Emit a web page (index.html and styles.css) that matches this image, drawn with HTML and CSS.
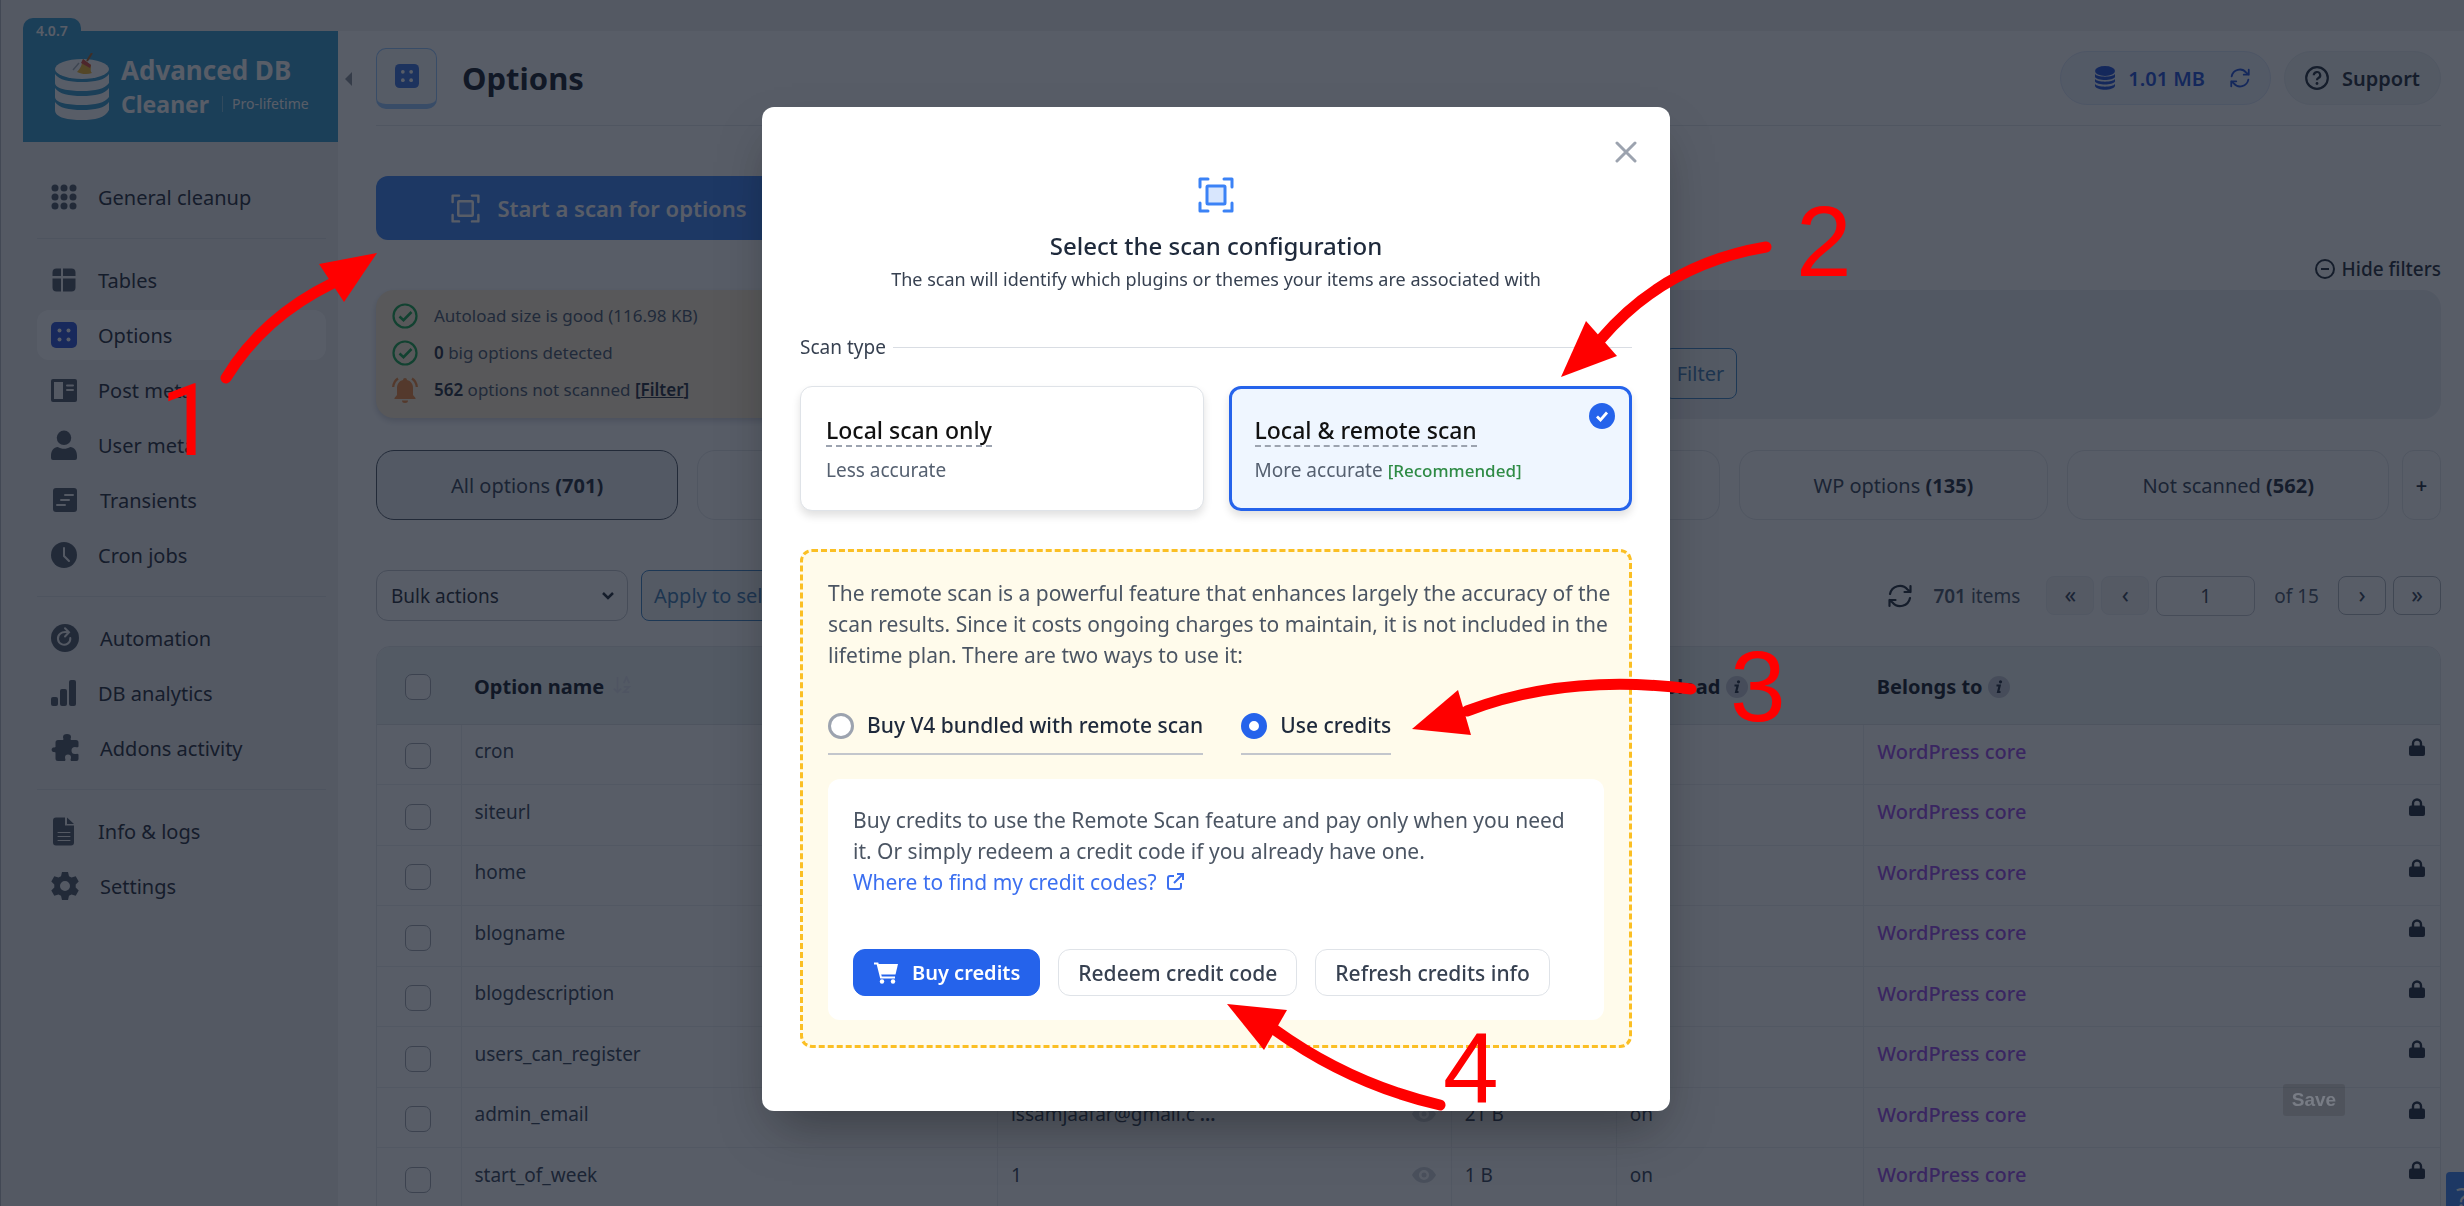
FILE: index.html
```html
<!DOCTYPE html>
<html lang="en">
<head>
  <meta charset="UTF-8" />
  <meta name="viewport" content="width=device-width, initial-scale=1.0" />
  <title>Options - Advanced DB Cleaner</title>
  <link rel="stylesheet" href="styles.css">
</head>
<body>
  <!-- Shared icons -->
  <svg class="sprite" aria-hidden="true">
    <symbol id="i-scan" viewBox="0 0 36 36">
      <path d="M2 10V2h8M26 2h8v8M34 26v8h-8M10 34H2v-8" fill="none" stroke="currentColor" stroke-width="3" stroke-linecap="round" stroke-linejoin="round"/>
      <rect x="9" y="9" width="18" height="18" rx="1" fill="currentColor" fill-opacity="0.2" stroke="currentColor" stroke-width="3"/>
    </symbol>
    <symbol id="i-options" viewBox="0 0 26 26">
      <rect width="26" height="26" rx="5" fill="currentColor"/>
      <g fill="#fff"><circle cx="8.500" cy="8.500" r="2"/><circle cx="17.500" cy="8.500" r="2"/><circle cx="8.500" cy="17.500" r="2"/><circle cx="17.500" cy="17.500" r="2"/></g>
    </symbol>
    <symbol id="i-check" viewBox="0 0 26 26">
      <circle cx="13" cy="13" r="11.500" fill="none" stroke="currentColor" stroke-width="2.200"/>
      <path d="M7.500 13.500l4 3.700 8-8.200" fill="none" stroke="currentColor" stroke-width="2.600"/>
    </symbol>
    <symbol id="i-refresh" viewBox="0 0 24 24">
      <g fill="none" stroke="currentColor" stroke-width="2.200" stroke-linecap="round" stroke-linejoin="round">
        <path d="M2 10a10 10 0 0 1 17.500-4.500L22.500 8M22.500 2v6h-6"/>
        <path d="M22 14a10 10 0 0 1-17.500 4.500L1.500 16M1.500 22v-6h6"/>
      </g>
    </symbol>
    <symbol id="i-info" viewBox="0 0 22 22">
      <circle cx="11" cy="11" r="11" fill="#c3c7d2"/>
      <path d="M8.500 9.500h3.200l-1.600 6.500h2.400" fill="none" stroke="#1e293b" stroke-width="2.200"/>
      <circle cx="12.500" cy="5.800" r="1.600" fill="#1e293b"/>
    </symbol>
    <symbol id="i-eye" viewBox="0 0 24 16">
      <path fill="currentColor" fill-rule="evenodd" d="M12 0c5 0 9.500 3 12 8-2.500 5-7 8-12 8S2.500 13 0 8c2.500-5 7-8 12-8zm0 3a5 5 0 1 0 0 10 5 5 0 0 0 0-10z"/>
      <circle cx="12" cy="8" r="2.500" fill="currentColor"/>
    </symbol>
    <symbol id="i-lock" viewBox="0 0 16 18">
      <path d="M4 8V5.500a4 4 0 0 1 8 0V8" fill="none" stroke="currentColor" stroke-width="2.400"/>
      <rect y="7.500" width="16" height="10.500" rx="2" fill="currentColor"/>
    </symbol>
  </svg>

  <div class="page">
    <aside class="sidebar">
      <div class="brand">
        <span class="version">4.0.7</span>
        <svg class="brand-logo" viewBox="0 0 54 68">
          <g fill="#fff">
            <ellipse cx="27" cy="16" rx="27" ry="10"/>
            <path d="M0 21c4 6 14 8 27 8s23-2 27-8v9c-4 6-14 8-27 8S0 36 0 30z"/>
            <path d="M0 35c4 6 14 8 27 8s23-2 27-8v9c-4 6-14 8-27 8S0 50 0 44z"/>
            <path d="M0 49c4 6 14 8 27 8s23-2 27-8v8c-4 8-14 10-27 10S0 65 0 57z"/>
          </g>
          <path d="M28 6l8 6c0 4-1 6 1 8-5 2-11 1-15-1 4-4 5-8 6-13z" fill="#f0b429"/>
          <path d="M28 6l8 6-1 3-9-5z" fill="#d9483b"/>
          <path d="M32 8l5-8" stroke="#a8632a" stroke-width="2"/>
          <path d="M18 17l6-7" stroke="#a9b1ba" stroke-width="1.500"/>
        </svg>
        <div class="brand-name">
          <strong>Advanced DB</strong>
          <div class="brand-line"><strong>Cleaner</strong><span class="plan">Pro-lifetime</span></div>
        </div>
      </div>

      <nav class="menu">
        <a class="menu-item" href="#">
          <svg class="icon" viewBox="0 0 26 26"><g fill="currentColor"><circle cx="4" cy="4" r="3.500"/><circle cx="13" cy="4" r="3.500"/><circle cx="22" cy="4" r="3.500"/><circle cx="4" cy="13" r="3.500"/><circle cx="13" cy="13" r="3.500"/><circle cx="22" cy="13" r="3.500"/><circle cx="4" cy="22" r="3.500"/><circle cx="13" cy="22" r="3.500"/><circle cx="22" cy="22" r="3.500"/></g></svg>
          General cleanup
        </a>
        <hr>
        <a class="menu-item" href="#">
          <svg class="icon" viewBox="0 0 26 26"><path fill="currentColor" d="M5.500 1.500H10V9H1.500V5.500a4 4 0 0 1 4-4zM12 1.500h8.500a4 4 0 0 1 4 4V9H12zM1.500 11.500H10v13H5.500a4 4 0 0 1-4-4zM12 11.500h12.500v9a4 4 0 0 1-4 4H12z"/></svg>
          Tables
        </a>
        <a class="menu-item active" href="#">
          <svg class="icon"><use href="#i-options"/></svg>
          Options
        </a>
        <a class="menu-item" href="#">
          <svg class="icon" viewBox="0 0 26 26"><rect y="2" width="26" height="23" rx="2" fill="currentColor"/><path class="cut" d="M3 5h9v17H3z"/><path class="cut-line" d="M16 8.500h6M16 13h6"/></svg>
          Post meta
        </a>
        <a class="menu-item" href="#">
          <svg class="icon tall" viewBox="0 0 27 32"><g fill="currentColor"><circle cx="13.500" cy="8" r="7.500"/><path d="M7 17.500c4 2.500 9 2.500 13 0 4 0 7 4 7 9V29a2 2 0 0 1-2 2H2a2 2 0 0 1-2-2v-2.500c0-5 3-9 7-9z"/></g></svg>
          User meta
        </a>
        <a class="menu-item" href="#">
          <svg class="icon wide" viewBox="0 0 28 26"><rect x="2" y="1" width="24" height="24" rx="3" fill="currentColor"/><path class="cut-line" d="M14 8h8M10 13h8M6 18h8"/></svg>
          Transients
        </a>
        <a class="menu-item" href="#">
          <svg class="icon" viewBox="0 0 26 26"><circle cx="13" cy="13" r="13" fill="currentColor"/><path class="cut-line" d="M13 6v8l5 5"/></svg>
          Cron jobs
        </a>
        <hr>
        <a class="menu-item" href="#">
          <svg class="icon wide" viewBox="0 0 28 28"><circle cx="14" cy="14" r="14" fill="currentColor"/><path class="cut-line" d="M9.500 9.500a6.200 6.200 0 1 0 9.800 4.500M9.500 9.500C11 8 13 7.500 17 8.200M14 4.200l4 4-4 4.300"/></svg>
          Automation
        </a>
        <a class="menu-item" href="#">
          <svg class="icon" viewBox="0 0 26 26"><g fill="currentColor"><rect y="17" width="7" height="9" rx="2"/><rect x="9" y="9" width="7" height="17" rx="2"/><rect x="18" width="7" height="26" rx="2"/></g></svg>
          DB analytics
        </a>
        <a class="menu-item" href="#">
          <svg class="icon wide" viewBox="0 0 28 28"><path fill="currentColor" d="M7 6h5c1-1 0-1.500 0-3a4 3 0 0 1 8 0c0 1.500-1 2 0 3h5a2.500 2.500 0 0 1 2.500 2.500v4c-1 1.500-2 .500-3.500.500a3.500 3.500 0 0 0 0 7c1.500 0 2.500-1 3.500.500v4.500a2 2 0 0 1-2 2h-5.500c-1-1.500 0-2 0-3.500a3 3 0 0 0-6 0c0 1.500 1 2 0 3.500H7a2.500 2.500 0 0 1-2.500-2.500v-6c-1-1-1.500-.5-2.500-.5a2.500 2.500 0 0 1 0-4.500c1 0 1.500 0 2.500-.500V8.500A2.500 2.500 0 0 1 7 6z"/></svg>
          Addons activity
        </a>
        <hr>
        <a class="menu-item" href="#">
          <svg class="icon tall" viewBox="0 0 26 30"><path fill="currentColor" d="M5 1h9v8h9v17a3 3 0 0 1-3 3H5a3 3 0 0 1-3-3V4a3 3 0 0 1 3-3zM16 1l7 6.500h-7z"/><path class="cut-line thin" d="M7 16h12M7 20h12M7 24h12"/></svg>
          Info &amp; logs
        </a>
        <a class="menu-item" href="#">
          <svg class="icon wide" viewBox="0 0 28 28"><path fill="currentColor" fill-rule="evenodd" d="M11 0h6l1 4.200 2.500 1.400L24.700 4.300l3 5.200-3 3v3l3 3-3 5.200-4.200-1.300L18 23.800 17 28h-6l-1-4.200-2.500-1.400-4.200 1.300-3-5.200 3-3v-3l-3-3 3-5.200 4.200 1.300L10 4.200zM14 9a5 5 0 1 0 0 10 5 5 0 0 0 0-10z"/></svg>
          Settings
        </a>
      </nav>
    </aside>

    <main class="main">
      <span class="collapse"></span>
      <header class="page-header">
        <span class="header-icon"><svg><use href="#i-options"/></svg></span>
        <h1>Options</h1>
        <div class="header-actions">
          <button class="pill db-size">
            <svg class="db-icon" viewBox="0 0 20 24"><g fill="currentColor"><ellipse cx="10" cy="5" rx="10" ry="5"/><path d="M0 8c2 3.500 18 3.500 20 0v3c-2 4-18 4-20 0zM0 13c2 3.500 18 3.500 20 0v2.500c-2 4-18 4-20 0zM0 18c2 3.500 18 3.500 20 0v2c-2 5-18 5-20 0z"/></g></svg>
            1.01 MB
            <svg class="sync"><use href="#i-refresh"/></svg>
          </button>
          <button class="pill">
            <svg viewBox="0 0 24 24"><circle cx="12" cy="12" r="10.800" fill="none" stroke="currentColor" stroke-width="2.200"/><path d="M8.800 9.300a3.200 3.200 0 1 1 4.600 2.800c-1 .500-1.400 1-1.400 2.200" fill="none" stroke="currentColor" stroke-width="2.200"/><circle cx="12" cy="17.500" r="1.400" fill="currentColor"/></svg>
            Support
          </button>
        </div>
      </header>

      <button class="scan-btn"><svg><use href="#i-scan"/></svg>Start a scan for options</button>

      <a class="hide-filters" href="#">
        <svg viewBox="0 0 20 20"><circle cx="10" cy="10" r="9" fill="none" stroke="currentColor" stroke-width="2"/><path d="M6 10h8" stroke="currentColor" stroke-width="2"/></svg>
        Hide filters
      </a>

      <div class="filters-row">
        <ul class="notices">
          <li><svg class="good"><use href="#i-check"/></svg>Autoload size is good (116.98 KB)</li>
          <li><svg class="good"><use href="#i-check"/></svg><span><b>0</b> big options detected</span></li>
          <li>
            <svg class="bell" viewBox="0 0 26 26"><path fill="currentColor" d="M13 1a2 2 0 0 1 2 2c4 1 6 4 6 8v7l2.500 3v1h-21v-1L5 18v-7c0-4 2-7 6-8a2 2 0 0 1 2-2zM10 23.500h6a3 2.500 0 0 1-6 0z"/><path d="M1.200 10C1.500 6 3 3.500 6 1.500M24.800 10c-.300-4-1.800-6.500-4.800-8.500" fill="none" stroke="currentColor" stroke-width="2.300"/></svg>
            <span><b>562</b> options not scanned <a href="#">[<u>Filter</u>]</a></span>
          </li>
        </ul>
        <div class="filter-panel"><button class="outline-btn">Filter</button></div>
      </div>

      <div class="tabs">
        <button class="tab current">All options <b>(701)</b></button>
        <button class="tab">Plugins options <b>(3)</b></button>
        <button class="tab">Themes options <b>(1)</b></button>
        <button class="tab">Orphan options <b>(0)</b></button>
        <button class="tab">WP options <b>(135)</b></button>
        <button class="tab">Not scanned <b>(562)</b></button>
        <button class="tab add">+</button>
      </div>

      <div class="toolbar">
        <select aria-label="Bulk actions"><option>Bulk actions</option></select>
        <button class="outline-btn">Apply to selected</button>
        <div class="pagination">
          <svg class="sync"><use href="#i-refresh"/></svg>
          <span class="count"><b>701</b> items</span>
          <button disabled>&laquo;</button>
          <button disabled>&lsaquo;</button>
          <input type="text" value="1" aria-label="Page">
          <span class="total">of 15</span>
          <button>&rsaquo;</button>
          <button>&raquo;</button>
        </div>
      </div>

      <div class="table-wrap">
        <table>
          <colgroup><col class="c-check"><col class="c-name"><col class="c-value"><col class="c-size"><col class="c-autoload"><col></colgroup>
          <thead>
            <tr>
              <th><input type="checkbox" aria-label="Select all"></th>
              <th>Option name <svg class="sort" viewBox="0 0 20 20"><path d="M5 1v17M1 14l4 4 4-4M12 8l3-7 3 7M12 12h6l-6 6h6" fill="none" stroke="currentColor" stroke-width="2"/></svg></th>
              <th>Value</th>
              <th>Size</th>
              <th>Autoload <svg class="info"><use href="#i-info"/></svg></th>
              <th>Belongs to <svg class="info"><use href="#i-info"/></svg></th>
            </tr>
          </thead>
          <tbody>
            <tr>
              <td><input type="checkbox" aria-label="cron"></td><td>cron</td>
              <td><div class="value"></div></td><td></td><td>on</td>
              <td><div class="owner"><span>WordPress core</span><svg><use href="#i-lock"/></svg></div></td>
            </tr>
            <tr>
              <td><input type="checkbox" aria-label="siteurl"></td><td>siteurl</td>
              <td><div class="value"></div></td><td></td><td>on</td>
              <td><div class="owner"><span>WordPress core</span><svg><use href="#i-lock"/></svg></div></td>
            </tr>
            <tr>
              <td><input type="checkbox" aria-label="home"></td><td>home</td>
              <td><div class="value"></div></td><td></td><td>on</td>
              <td><div class="owner"><span>WordPress core</span><svg><use href="#i-lock"/></svg></div></td>
            </tr>
            <tr>
              <td><input type="checkbox" aria-label="blogname"></td><td>blogname</td>
              <td><div class="value"></div></td><td></td><td>on</td>
              <td><div class="owner"><span>WordPress core</span><svg><use href="#i-lock"/></svg></div></td>
            </tr>
            <tr>
              <td><input type="checkbox" aria-label="blogdescription"></td><td>blogdescription</td>
              <td><div class="value"></div></td><td></td><td>on</td>
              <td><div class="owner"><span>WordPress core</span><svg><use href="#i-lock"/></svg></div></td>
            </tr>
            <tr>
              <td><input type="checkbox" aria-label="users_can_register"></td><td>users_can_register</td>
              <td><div class="value"></div></td><td></td><td>on</td>
              <td><div class="owner"><span>WordPress core</span><svg><use href="#i-lock"/></svg></div></td>
            </tr>
            <tr>
              <td><input type="checkbox" aria-label="admin_email"></td><td>admin_email</td>
              <td><div class="value"><span>issamjaafar@gmail.c <b>...</b></span><svg><use href="#i-eye"/></svg></div></td><td>21 B</td><td>on</td>
              <td><div class="owner"><span>WordPress core</span><svg><use href="#i-lock"/></svg></div></td>
            </tr>
            <tr>
              <td><input type="checkbox" aria-label="start_of_week"></td><td>start_of_week</td>
              <td><div class="value"><span>1</span><svg><use href="#i-eye"/></svg></div></td><td>1 B</td><td>on</td>
              <td><div class="owner"><span>WordPress core</span><svg><use href="#i-lock"/></svg></div></td>
            </tr>
          </tbody>
        </table>
      </div>
    </main>

    <button class="help-btn">?</button>
  </div>

  <div class="overlay">
    <section class="modal" role="dialog" aria-labelledby="modalTitle">
      <button class="close" aria-label="Close">
        <svg viewBox="0 0 22 22"><path d="M2 2l18 18M20 2L2 20" stroke="currentColor" stroke-width="3" stroke-linecap="round"/></svg>
      </button>
      <svg class="modal-icon"><use href="#i-scan"/></svg>
      <h2 id="modalTitle">Select the scan configuration</h2>
      <p class="subtitle">The scan will identify which plugins or themes your items are associated with</p>

      <div class="section-label">Scan type</div>
      <div class="cards">
        <button class="card">
          <span class="card-title">Local scan only</span>
          <span class="card-text">Less accurate</span>
        </button>
        <button class="card selected">
          <span class="card-title">Local &amp; remote scan</span>
          <span class="card-text">More accurate <em>[Recommended]</em></span>
          <svg class="tick" viewBox="0 0 26 26"><circle cx="13" cy="13" r="13" fill="currentColor"/><path d="M8 13.500l3.500 3.500L18 9.500" fill="none" stroke="#fff" stroke-width="2.800"/></svg>
        </button>
      </div>

      <div class="credits">
        <p>The remote scan is a powerful feature that enhances largely the accuracy of the scan results. Since it costs ongoing charges to maintain, it is not included in the lifetime plan. There are two ways to use it:</p>
        <div class="choices">
          <label><input type="radio" name="mode">Buy V4 bundled with remote scan</label>
          <label><input type="radio" name="mode" checked>Use credits</label>
        </div>
        <div class="credits-box">
          <p>Buy credits to use the Remote Scan feature and pay only when you need it. Or simply redeem a credit code if you already have one.<br>
            <a href="#">Where to find my credit codes? <svg viewBox="0 0 18 18"><path d="M8 3H4a2 2 0 0 0-2 2v9a2 2 0 0 0 2 2h9a2 2 0 0 0 2-2v-4M11 1h6v6M17 1L8 10" fill="none" stroke="currentColor" stroke-width="2"/></svg></a></p>
          <div class="buttons">
            <button class="primary">
              <svg viewBox="0 0 25 22"><path d="M1 1.500h3.500l3.500 14h14" fill="none" stroke="currentColor" stroke-width="2"/><path d="M5 2h20l-2.500 10.500H7.500z" fill="currentColor"/><circle cx="9" cy="19.500" r="2.200" fill="currentColor"/><circle cx="20" cy="19.500" r="2.200" fill="currentColor"/></svg>
              Buy credits
            </button>
            <button>Redeem credit code</button>
            <button>Refresh credits info</button>
          </div>
        </div>
      </div>
    </section>
  </div>

  <button class="save-btn">Save</button>

  <!-- Step arrows -->
  <svg class="steps" viewBox="0 0 2464 1206">
    <g class="shafts">
      <path d="M226 378Q263 317 333 283"/>
      <path d="M1601 339Q1665 264 1766 247"/>
      <path d="M1467 711Q1567 673 1691 689"/>
      <path d="M1275 1030Q1350 1084 1440 1105"/>
    </g>
    <g class="heads">
      <path d="M377 253l-58 11 25 38z"/>
      <path d="M1561 377l25-56 31 35z"/>
      <path d="M1412 729l46-39 13 45z"/>
      <path d="M1227 1004l60 6-23 40z"/>
    </g>
    <g class="numbers">
      <text class="one" x="160" y="455">1</text>
      <text x="1796" y="276">2</text>
      <text x="1730" y="721">3</text>
      <text x="1443" y="1103">4</text>
    </g>
  </svg>
</body>
</html>
```
FILE: styles.css
```css
* {
  margin: 0;
  padding: 0;
  box-sizing: border-box;
}
body {
  height: 100vh;
  overflow: hidden;
  background: #f0f0f1;
  color: #374151;
  font-family: "Noto Sans", "Open Sans", sans-serif;
  font-size: 19px;
}
button, input, select {
  font-family: inherit;
  font-size: inherit;
  color: inherit;
}
button {
  cursor: pointer;
  background: none;
  border: none;
}
a {
  color: inherit;
  text-decoration: none;
}
b {
  font-weight: 600;
}
.sprite {
  display: none;
}
.page {
  position: relative;
  display: flex;
  height: 100vh;
  padding: 31px 0 0 22px;
  border-left: 1px solid #b5b9c0;
}

/* Sidebar */
.sidebar {
  flex: none;
  width: 315px;
}
.brand {
  position: relative;
  display: flex;
  align-items: center;
  gap: 12px;
  height: 111px;
  padding: 0 24px 0 32px;
  background: #3399cc;
  color: #fff;
}
.version {
  position: absolute;
  left: 0;
  top: -13px;
  height: 26px;
  padding: 0 13px;
  border-radius: 10px 10px 0 0;
  background: #3399cc;
  font-size: 14px;
  font-weight: 600;
  line-height: 26px;
}
.brand-logo {
  flex: none;
  width: 54px;
  height: 68px;
}
.brand-name strong {
  display: block;
  font-size: 26px;
  font-weight: 700;
  line-height: 34px;
}
.brand-line {
  display: flex;
  align-items: center;
}
.brand-line strong {
  font-size: 23px;
}
.plan {
  margin-left: 13px;
  padding-left: 9px;
  border-left: 1px solid #7ebede;
  font-size: 14px;
  line-height: 16px;
  white-space: nowrap;
}
.menu {
  display: flex;
  flex-direction: column;
  gap: 5px;
  padding: 30px 12px 0 14px;
}
.menu hr {
  margin: 11px 0;
  border: none;
  border-top: 1px solid #dcdfe4;
}
.menu-item {
  display: flex;
  align-items: center;
  gap: 21px;
  height: 50px;
  padding-left: 14px;
  border-radius: 12px;
  color: #1f2937;
  font-size: 20px;
}
.menu-item.active {
  background: #fff;
}
.icon {
  width: 26px;
  height: 26px;
  color: #4b5563;
}
.icon.tall {
  height: 31px;
}
.icon.wide {
  width: 28px;
  height: 28px;
}
.active .icon {
  color: #2952d9;
}
.cut {
  fill: #f0f0f1;
}
.cut-line {
  fill: none;
  stroke: #f0f0f1;
  stroke-width: 2;
  stroke-linecap: round;
}
.cut-line.thin {
  stroke-width: 1;
}

/* Main column */
.main {
  position: relative;
  flex: 1;
  min-width: 0;
  padding: 0 23px 0 38px;
  background: #fff;
}
.collapse {
  position: absolute;
  left: 7px;
  top: 41px;
  border: 7px solid transparent;
  border-right-color: #8b919c;
  border-left: none;
}
.page-header {
  display: flex;
  align-items: center;
  height: 95px;
  border-bottom: 1px solid #e5e7eb;
}
.header-icon {
  display: flex;
  justify-content: center;
  align-items: center;
  width: 61px;
  height: 61px;
  margin-right: 25px;
  border: 1px solid #93c5fd;
  border-bottom-width: 5px;
  border-radius: 10px;
  background: #f8fafc;
  color: #3b73e0;
}
.header-icon svg {
  width: 24px;
  height: 24px;
}
h1 {
  font-size: 31px;
  font-weight: 700;
  color: #111827;
}
.header-actions {
  display: flex;
  gap: 13px;
  margin-left: auto;
}
.pill {
  display: flex;
  align-items: center;
  gap: 13px;
  height: 54px;
  padding: 0 20px;
  border: 1px solid #e9edf0;
  border-radius: 27px;
  background: #f0f4f5;
  color: #1f2937;
  font-size: 20px;
  font-weight: 600;
}
.pill svg {
  width: 24px;
  height: 24px;
}
.pill.db-size {
  padding-left: 34px;
  border-color: #dbe6f8;
  background: #eff3fc;
  color: #1d4ed8;
}
.pill .db-icon {
  width: 20px;
}
.pill .sync {
  width: 20px;
  height: 20px;
  margin-left: 12px;
}
.scan-btn {
  display: flex;
  align-items: center;
  justify-content: center;
  gap: 17px;
  width: 446px;
  height: 64px;
  margin-top: 50px;
  border-radius: 12px;
  background: #3b82f6;
  color: #fff;
  font-size: 22px;
  font-weight: 600;
}
.scan-btn svg {
  width: 29px;
  height: 29px;
}
.hide-filters {
  display: flex;
  align-items: center;
  justify-content: flex-end;
  gap: 7px;
  margin: 15px 0 7px;
  color: #1f2937;
  font-weight: 500;
  line-height: 28px;
}
.hide-filters svg {
  width: 20px;
  height: 20px;
}
.filters-row {
  display: grid;
  grid-template-columns: 1fr 3fr;
  gap: 25px;
}
.notices {
  height: 128px;
  padding: 7px 16px;
  border-radius: 18px;
  background: #fdeed2;
  box-shadow: 0 3px 6px rgba(30, 41, 80, 0.2);
  color: #475569;
  font-size: 17px;
  list-style: none;
}
.notices li {
  display: flex;
  align-items: center;
  gap: 16px;
  height: 37px;
}
.notices svg {
  width: 26px;
  height: 26px;
}
.notices b, .notices a {
  color: #1e293b;
  font-weight: 600;
}
.good {
  color: #16a34a;
}
.bell {
  color: #f0883a;
}
.filter-panel {
  display: flex;
  align-items: flex-end;
  justify-content: flex-end;
  height: 129px;
  padding: 0 46% 20px 0;
  border-radius: 18px;
  background: #eceef2;
}
.outline-btn {
  height: 51px;
  padding: 0 12px;
  border: 1px solid #3b82c4;
  border-radius: 8px;
  background: #f0f4f5;
  color: #3b78b0;
  font-size: 20px;
}
.tabs {
  display: flex;
  gap: 19px;
  margin-top: 31px;
}
.tab {
  flex: 1 1 auto;
  height: 70px;
  border: 1px solid #e3e6ea;
  border-radius: 18px;
  color: #334155;
  font-size: 20px;
}
.tab b {
  color: #1e293b;
  font-weight: 700;
}
.tab.current {
  border: 1px solid #4b5563;
  background: #eff1f4;
}
.tab.add {
  flex: none;
  width: 39px;
  margin-left: -6px;
  border-radius: 12px;
  color: #1e293b;
  font-weight: 600;
}
.toolbar {
  display: flex;
  align-items: center;
  gap: 13px;
  margin-top: 50px;
}
.toolbar select {
  width: 252px;
  height: 51px;
  padding: 0 14px;
  border: 1px solid #c3c7ce;
  border-radius: 12px;
  appearance: none;
  background: #fff url("data:image/svg+xml,%3Csvg xmlns='http://www.w3.org/2000/svg' width='14' height='10'%3E%3Cpath d='M2 2l5 5 5-5' fill='none' stroke='%231f2937' stroke-width='2.500'/%3E%3C/svg%3E") no-repeat right 12px center;
  color: #1f2937;
}
.pagination {
  display: flex;
  align-items: center;
  gap: 7px;
  margin-left: auto;
}
.pagination .sync {
  width: 24px;
  height: 24px;
  color: #1f2937;
}
.count {
  margin: 0 19px 0 14px;
  color: #475569;
}
.pagination button {
  width: 48px;
  height: 39px;
  padding-bottom: 4px;
  border: 1px solid #aeb4bd;
  border-radius: 8px;
  color: #334155;
  font-size: 23px;
  line-height: 30px;
}
.pagination button:disabled {
  border-color: #eceef1;
  background: #f3f4f6;
}
.pagination input {
  width: 99px;
  height: 40px;
  border: 1px solid #c3c7ce;
  border-radius: 8px;
  background: #fff;
  text-align: center;
}
.total {
  margin: 0 12px;
  color: #475569;
}

/* Options table */
.table-wrap {
  margin-top: 25px;
  border: 1px solid #e3e6ea;
  border-radius: 14px 14px 0 0;
  overflow: hidden;
}
table {
  width: 100%;
  border-collapse: collapse;
  table-layout: fixed;
}
.c-check {
  width: 84px;
}
.c-name {
  width: 26%;
}
.c-value {
  width: 22%;
}
.c-size {
  width: 8%;
}
.c-autoload {
  width: 12%;
}
th {
  height: 77px;
  padding: 2px 13px 0;
  border-bottom: 1px solid #dde0e5;
  background: #eef3f5;
  color: #111827;
  font-size: 20px;
  font-weight: 700;
  text-align: left;
}
td {
  height: 60px;
  padding: 0 15px 6px 13px;
  border-bottom: 1px solid #eceef1;
  border-left: 1px solid #eceef1;
  color: #334155;
}
tr:nth-child(even) td {
  height: 61px;
}
th:first-child, td:first-child {
  padding: 4px 0 0 28px;
  border-left: none;
}
input[type="checkbox"] {
  display: block;
  appearance: none;
  width: 26px;
  height: 26px;
  border: 1px solid #a0a5ae;
  border-radius: 7px;
  background: #fff;
}
.sort {
  width: 18px;
  height: 18px;
  margin-left: 4px;
  color: #e0e3ee;
}
.info {
  width: 22px;
  height: 22px;
  vertical-align: -4px;
}
.value, .owner {
  display: flex;
  align-items: center;
  justify-content: space-between;
}
.value svg {
  width: 24px;
  height: 16px;
  color: #d0d4da;
}
.owner {
  color: #9c48ea;
  font-size: 20px;
  font-weight: 500;
}
.owner svg {
  width: 16px;
  height: 18px;
  margin-bottom: 9px;
  color: #1e293b;
}

.help-btn {
  position: absolute;
  right: -32px;
  bottom: -16px;
  width: 50px;
  height: 50px;
  border-radius: 4px;
  background: #3b82f6;
  color: #fff;
  font-size: 28px;
  text-align: left;
  padding-left: 10px;
}
.save-btn {
  position: fixed;
  right: 119px;
  bottom: 90px;
  width: 62px;
  height: 32px;
  border-radius: 3px;
  background: rgba(0, 0, 0, 0.1);
  color: #787c85;
  font-family: "Liberation Sans", sans-serif;
  font-weight: 700;
}

/* Scan dialog */
.overlay {
  position: fixed;
  inset: 0;
  display: flex;
  justify-content: center;
  align-items: flex-start;
  padding: 107px 32px 0 0;
  background: rgba(17, 24, 39, 0.7);
}
.modal {
  position: relative;
  width: 100%;
  max-width: 908px;
  padding: 70px 38px 63px;
  border-radius: 12px;
  background: #fff;
  box-shadow: 0 25px 50px -12px rgba(0, 0, 0, 0.35);
}
.close {
  position: absolute;
  top: 34px;
  right: 33px;
  color: #9ca3af;
}
.close svg {
  display: block;
  width: 22px;
  height: 22px;
}
.modal-icon {
  display: block;
  width: 36px;
  height: 36px;
  margin: 0 auto 17px;
  color: #3b82f6;
}
h2 {
  color: #1e293b;
  font-size: 24px;
  font-weight: 500;
  line-height: 32px;
  text-align: center;
}
.subtitle {
  margin: 3px 0 40px;
  color: #374151;
  font-size: 18px;
  line-height: 28px;
  text-align: center;
}
.section-label {
  display: flex;
  align-items: center;
  gap: 7px;
  margin-bottom: 25px;
  color: #374151;
  line-height: 28px;
}
.section-label::after {
  content: "";
  flex: 1;
  border-top: 1px solid #d9dde3;
}
.cards {
  display: grid;
  grid-template-columns: 1fr 1fr;
  gap: 25px;
  margin-bottom: 38px;
}
.card {
  position: relative;
  display: flex;
  flex-direction: column;
  align-items: flex-start;
  height: 125px;
  padding: 28px 25px;
  border: 1px solid #dfe3e8;
  border-radius: 12px;
  background: #fff;
  box-shadow: 0 5px 9px rgba(0, 0, 0, 0.12);
}
.card.selected {
  padding: 26px 23px;
  border: 3px solid #2563eb;
  background: #eff6ff;
}
.card-title {
  border-bottom: 2px dashed #9ca3af;
  color: #111;
  font-size: 23px;
  font-weight: 500;
  line-height: 30px;
}
.card-text {
  margin-top: 9px;
  color: #556070;
  line-height: 28px;
}
.card-text em {
  color: #2e8b45;
  font-size: 17px;
  font-style: normal;
  font-weight: 500;
}
.tick {
  position: absolute;
  top: 14px;
  right: 14px;
  width: 26px;
  height: 26px;
  color: #2563eb;
}
.credits {
  padding: 26px 18px 25px 25px;
  border: 3px dashed #fbbf24;
  border-radius: 12px;
  background: #fffbeb;
  color: #4b5563;
  font-size: 21px;
  line-height: 31px;
}
.choices {
  display: flex;
  gap: 38px;
  margin: 37px 0 24px;
}
.choices label {
  display: flex;
  align-items: center;
  gap: 13px;
  padding-bottom: 10px;
  border-bottom: 2px solid #c3c6cc;
  color: #1e293b;
  font-weight: 500;
  line-height: 35px;
}
input[type="radio"] {
  appearance: none;
  width: 26px;
  height: 26px;
  border: 3px solid #9ca3af;
  border-radius: 50%;
  background: #fff;
}
input[type="radio"]:checked {
  border: 8px solid #2563eb;
}
.credits-box {
  margin-right: 7px;
  padding: 26px 25px 24px;
  border-radius: 12px;
  background: #fff;
}
.credits-box a {
  color: #3b6ff0;
}
.credits-box a svg {
  width: 18px;
  height: 18px;
  margin-left: 4px;
  vertical-align: -1px;
}
.buttons {
  display: flex;
  gap: 18px;
  margin-top: 51px;
}
.buttons button {
  display: flex;
  align-items: center;
  gap: 14px;
  height: 47px;
  padding: 0 19px;
  border: 1px solid #dfe3e8;
  border-radius: 12px;
  color: #374151;
  font-weight: 500;
}
.buttons .primary {
  border-color: #2563eb;
  background: #2563eb;
  color: #fff;
  font-size: 20px;
  font-weight: 600;
}
.buttons svg {
  width: 25px;
  height: 22px;
}

.steps {
  position: fixed;
  left: 0;
  top: 0;
  width: 100%;
  pointer-events: none;
}
.shafts {
  fill: none;
  stroke: #f00;
  stroke-width: 11;
  stroke-linecap: round;
}
.heads, .numbers {
  fill: #f00;
}
.numbers {
  font-family: "Liberation Sans", Arial, sans-serif;
  font-size: 100px;
}
.numbers .one {
  font-family: Roboto, sans-serif;
}
```
